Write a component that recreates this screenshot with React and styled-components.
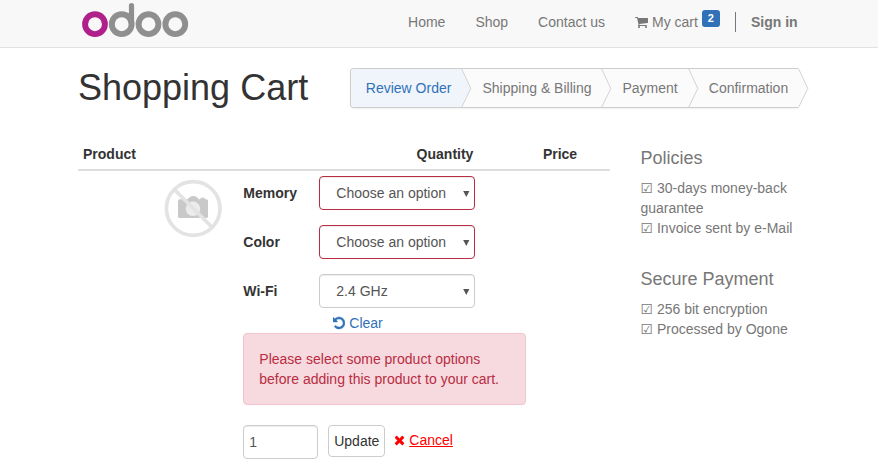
import React from 'react';
import styled, { createGlobalStyle } from 'styled-components';

const GlobalStyle = createGlobalStyle`
  *, *::before, *::after { box-sizing: border-box; }
  body {
    margin: 0;
    background: #fff;
    color: #333;
    font: 14px/20px "Liberation Sans", "DejaVu Sans", sans-serif;
    overflow: hidden;
  }
  button, input { font: inherit; }
`;

const Header = styled.header`
  height: 48px;
  background: #f8f8f8;
  border-bottom: 1px solid #e1e1e1;
`;

const HeaderInner = styled.div`
  display: flex;
  justify-content: space-between;
  width: 719.6px;
  margin-left: 78px;
`;

const Logo = styled.svg`
  display: block;
  width: 110px;
  height: 40px;
  margin-left: 3px;
`;

const Nav = styled.nav`
  display: flex;
  align-items: flex-start;
  padding-top: 12px;
  gap: 30px;
`;

const NavLink = styled.a`
  display: flex;
  height: 20px;
  color: #777;
  white-space: nowrap;
`;

const CartIcon = styled.svg`
  width: 14px;
  height: 14px;
  margin: 3px 3px 0 0;
  fill: currentColor;
`;

const Badge = styled.span`
  width: 18px;
  height: 17px;
  margin: -2px 0 0 4px;
  border-radius: 3px;
  background: #3071b8;
  color: #fff;
  font-size: 11px;
  font-weight: bold;
  line-height: 17px;
  text-align: center;
`;

const SignIn = styled(NavLink)`
  margin-left: -15px;
  padding-left: 15px;
  border-left: 1px solid #777;
  font-weight: bold;
`;

const TitleRow = styled.div`
  display: flex;
  justify-content: space-between;
  width: 720px;
  height: 60px;
  margin-left: 78px;
  padding-top: 20px;
`;

const Title = styled.h1`
  margin: 0;
  font-size: 36px;
  font-weight: 400;
  line-height: 40px;
`;

const Wizard = styled.ol`
  display: flex;
  width: 448px;
  height: 40px;
  margin: 0;
  padding: 0;
  list-style: none;
  border: 1px solid #ccc;
  border-right: 0;
  border-radius: 4px 0 0 4px;
  background: #fbfbfb;
  box-shadow: 0 1px 2px rgba(0, 0, 0, 0.06);
`;

const Step = styled.li`
  position: relative;
  flex: 0 0 ${(p) => p.$width}px;
  padding: 9px 0 0 ${(p) => (p.$active ? 14.8 : p.$indent || 21.5)}px;
  border-radius: ${(p) => (p.$active ? '3px 0 0 3px' : 0)};
  background: ${(p) => (p.$active ? '#f0f5fc' : 'transparent')};
  color: ${(p) => (p.$active ? '#3071b8' : '#777')};
  white-space: nowrap;
`;

const Chevron = styled.svg`
  position: absolute;
  z-index: 1;
  top: -1px;
  left: 100%;
  width: 11px;
  height: 40px;
  fill: ${(p) => (p.$active ? '#f0f5fc' : '#fbfbfb')};
`;

const Main = styled.main`
  display: flex;
  gap: 30.500px;
  margin: 31px 0 0 78px;
`;

const Cart = styled.section`
  width: 532px;
`;

const TableHead = styled.div`
  display: grid;
  grid-template-columns: 302px 130px 100px;
  height: 32px;
  padding-top: 5px;
  border-bottom: 2px solid #ddd;
  font-weight: bold;
  text-align: center;
`;

const ProductHead = styled.span`
  padding-left: 5px;
  text-align: left;
`;

const ProductRow = styled.div`
  display: flex;
  padding: 5px 0 0 86px;
`;

const Thumb = styled.svg`
  flex: none;
  width: 60px;
  height: 60px;
  margin: 3px 19.3px 0 0;
`;

const Details = styled.div`
  width: 283px;
`;

const Option = styled.div`
  display: flex;
  margin-bottom: 15px;
`;

const Label = styled.span`
  width: 76px;
  padding-top: 7px;
  font-weight: bold;
`;

const Select = styled.button`
  display: flex;
  justify-content: space-between;
  align-items: center;
  width: 156px;
  height: 34px;
  padding: 0 4px 0 16px;
  border: 1px solid ${(p) => (p.$invalid ? '#b92c42' : '#ccc')};
  border-radius: 4px;
  background: #fff;
  box-shadow: inset 0 1px 1px rgba(0, 0, 0, 0.075);
  color: #555;
`;

const Arrow = styled.svg`
  width: 7px;
  height: 6px;
  margin-top: 1px;
  fill: #555;
`;

const Clear = styled.a`
  display: flex;
  margin: -10px 0 0 90px;
  color: #3071b8;
`;

const ActionIcon = styled.svg`
  width: 12px;
  height: 14px;
  margin: 3px 4px 0 0;
  fill: currentColor;
  stroke: currentColor;
  stroke-width: 50;
`;

const Alert = styled.div`
  height: 72px;
  padding: 15px;
  border: 1px solid #efc4cd;
  border-radius: 4px;
  background: #f6dadf;
  color: #b92c42;
  white-space: nowrap;
`;

const Controls = styled.div`
  display: flex;
  margin-top: 20px;
`;

const QuantityInput = styled.input`
  width: 75px;
  height: 34px;
  margin-right: 10px;
  padding: 0 5px;
  border: 1px solid #ccc;
  border-radius: 4px;
  box-shadow: inset 0 1px 1px rgba(0, 0, 0, 0.075);
  color: #555;
`;

const UpdateButton = styled.button`
  width: 57px;
  height: 32px;
  margin-right: 9px;
  padding: 0;
  border: 1px solid #ccc;
  border-radius: 4px;
  background: #fff;
  color: #333;
`;

const Cancel = styled.a`
  display: flex;
  height: 20px;
  margin-top: 5px;
  color: #f00;
`;

const CancelText = styled.span`
  text-decoration: underline;
`;

const CrossIcon = styled.svg`
  width: 11px;
  height: 14px;
  margin: 3px 4px 0 0;
  fill: currentColor;
`;

const Sidebar = styled.aside`
  width: 162px;
  padding-top: 9px;
  color: #777;
`;

const InfoGroup = styled.section`
  margin-bottom: 31px;
`;

const InfoTitle = styled.h4`
  margin: 0 0 10px;
  font-size: 18px;
  font-weight: 400;
  line-height: 20px;
`;

const InfoList = styled.ul`
  margin: 0;
  padding: 0;
  list-style: none;
`;

const InfoItem = styled.li`
  &::before {
    content: '☑ ';
  }
`;

const steps = [
  { label: 'Review Order', width: 110, active: true },
  { label: 'Shipping & Billing', width: 140 },
  { label: 'Payment', width: 87 },
  { label: 'Confirmation', width: 110, indent: 20.8 },
];

const options = [
  { label: 'Memory', value: 'Choose an option', invalid: true },
  { label: 'Color', value: 'Choose an option', invalid: true },
  { label: 'Wi-Fi', value: '2.4 GHz' },
];

const info = [
  { title: 'Policies', items: ['30-days money-back guarantee', 'Invoice sent by e-Mail'] },
  { title: 'Secure Payment', items: ['256 bit encryption', 'Processed by Ogone'] },
];

export default function App() {
  return (
    <>
      <GlobalStyle />
      <Header>
        <HeaderInner>
          <Logo viewBox="81 0 110 40" fill="none" strokeWidth="5.9" aria-label="odoo">
            <g stroke="#8f8f8f">
              <circle cx="121.7" cy="24.2" r="9.9" />
              <path d="M131.500 24.200V5.700" strokeWidth="5.200" strokeLinecap="round" />
              <circle cx="148.500" cy="24.200" r="9.900" />
              <circle cx="175.300" cy="24.200" r="9.900" />
            </g>
            <circle cx="95" cy="24.200" r="9.900" stroke="#b0208a" />
          </Logo>
          <Nav>
            <NavLink>Home</NavLink>
            <NavLink>Shop</NavLink>
            <NavLink>Contact us</NavLink>
            <NavLink>
              <CartIcon viewBox="0 0 1792 1792">
                <path d="M640 1536q0 52-38 90t-90 38-90-38-38-90 38-90 90-38 90 38 38 90zm896 0q0 52-38 90t-90 38-90-38-38-90 38-90 90-38 90 38 38 90zm128-1088v512q0 24-16.5 42.5t-40.5 21.5l-1044 122q13 60 13 70 0 16-24 64h920q26 0 45 19t19 45-19 45-45 19h-1024q-26 0-45-19t-19-45q0-11 8-31.5t16-36 21.5-40 15.5-29.5l-177-823h-204q-26 0-45-19t-19-45 19-45 45-19h256q16 0 28.5 6.5t19.5 15.5 13 24.5 8 26 5.5 29.5 4.5 26h1201q26 0 45 19t19 45z" />
              </CartIcon>
              My cart
              <Badge>2</Badge>
            </NavLink>
            <SignIn>Sign in</SignIn>
          </Nav>
        </HeaderInner>
      </Header>

      <TitleRow>
        <Title>Shopping Cart</Title>
        <Wizard>
          {steps.map((s) => (
            <Step key={s.label} $width={s.width} $active={s.active} $indent={s.indent}>
              {s.label}
              <Chevron viewBox="0 0 11 40" $active={s.active}>
                <path d="M0 1L9.5 20.5L0 39Z" />
                <path d="M0.5 0.5L9.8 20.5L0.5 39.5" fill="none" stroke="#d2d2d2" />
              </Chevron>
            </Step>
          ))}
        </Wizard>
      </TitleRow>

      <Main>
        <Cart>
          <TableHead>
            <ProductHead>Product</ProductHead>
            <span>Quantity</span>
            <span>Price</span>
          </TableHead>
          <ProductRow>
            <Thumb viewBox="164 179 60 60">
              <path
                fill="#c9c9c9"
                d="M179.500 199.200H187.500L190.300 196.800Q193.300 195.300 196.500 196.800L199 199.200H200.500V197.800H204.800V199.200H206.500Q208 199.200 208 200.700V216.500Q208 218 206.500 218H179.500Q178 218 178 216.500V200.700Q178 199.200 179.500 199.200Z"
              />
              <circle cx="193" cy="208.800" r="7.200" fill="#ececec" />
              <circle cx="193.200" cy="208.500" r="26.800" fill="none" stroke="#e3e3e3" strokeWidth="3.700" />
              <path d="M174.300 189.500L212.300 227.500" stroke="#e3e3e3" strokeWidth="3.700" />
            </Thumb>
            <Details>
              {options.map((o) => (
                <Option key={o.label}>
                  <Label>{o.label}</Label>
                  <Select $invalid={o.invalid}>
                    {o.value}
                    <Arrow viewBox="0 0 7 6">
                      <path d="M0.200 0H6.400L3.300 6Z" />
                    </Arrow>
                  </Select>
                </Option>
              ))}
              <Clear>
                <ActionIcon viewBox="128 0 1536 1792">
                  <path d="M1664 896q0 156-61 298t-164 245-245 164-298 61q-172 0-327-72.5t-264-204.500q-7-10-6.500-22.500t8.500-20.500l137-138q10-9 25-9 16 2 23 12 73 95 179 147t225 52q104 0 198.500-40.500t163.500-109.500 109.500-163.500 40.500-198.500-40.500-198.500-109.500-163.500-163.500-109.500-198.500-40.500q-98 0-188 35.500t-160 101.500l137 138q31 30 14 69-17 40-59 40h-448q-26 0-45-19t-19-45v-448q0-42 40-59 39-17 69 14l130 129q107-101 244.500-156.500t284.500-55.500q156 0 298 61t245 164 164 245 61 298z" />
                </ActionIcon>
                Clear
              </Clear>
              <Alert>
                Please select some product options
                <br />
                before adding this product to your cart.
              </Alert>
              <Controls>
                <QuantityInput defaultValue="1" />
                <UpdateButton>Update</UpdateButton>
                <Cancel>
                  <CrossIcon viewBox="192 0 1408 1792">
                    <path d="M1490 1322q0 40-28 68l-136 136q-28 28-68 28t-68-28l-294-294-294 294q-28 28-68 28t-68-28l-136-136q-28-28-28-68t28-68l294-294-294-294q-28-28-28-68t28-68l136-136q28-28 68-28t68 28l294 294 294-294q28-28 68-28t68 28l136 136q28 28 28 68t-28 68l-294 294 294 294q28 28 28 68z" />
                  </CrossIcon>
                  <CancelText>Cancel</CancelText>
                </Cancel>
              </Controls>
            </Details>
          </ProductRow>
        </Cart>
        <Sidebar>
          {info.map((g) => (
            <InfoGroup key={g.title}>
              <InfoTitle>{g.title}</InfoTitle>
              <InfoList>
                {g.items.map((i) => (
                  <InfoItem key={i}>{i}</InfoItem>
                ))}
              </InfoList>
            </InfoGroup>
          ))}
        </Sidebar>
      </Main>
    </>
  );
}
